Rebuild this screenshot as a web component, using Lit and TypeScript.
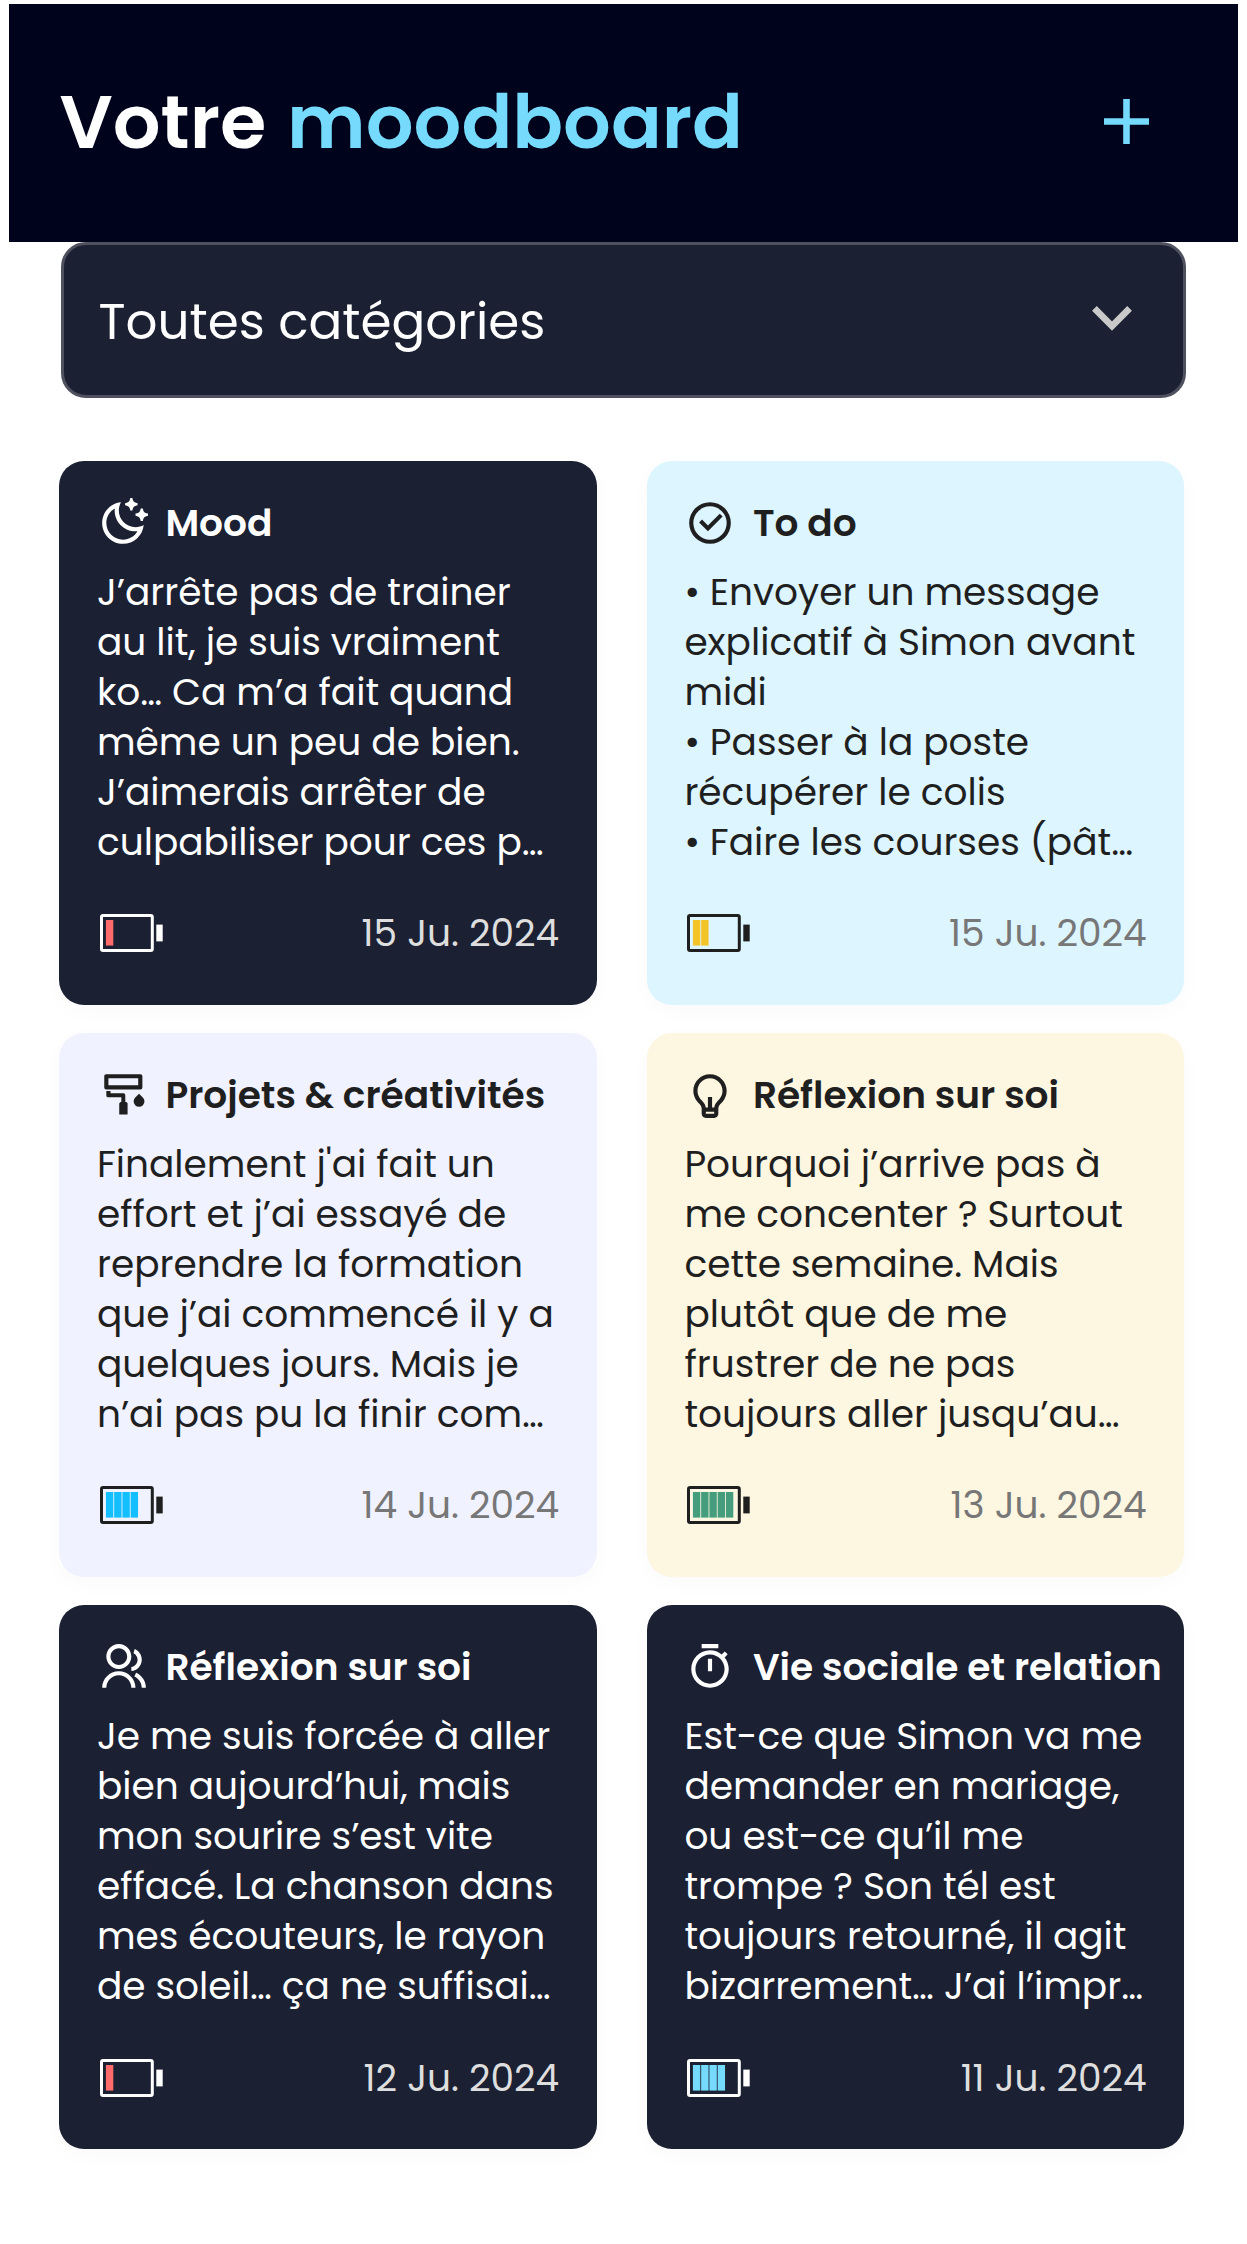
import {LitElement, html, css, svg} from 'lit';
import {customElement, property} from 'lit/decorators.js';

const icons: Record<string, unknown> = {
    moon: svg`<path d="M10 6C10 10.4183 13.5817 14 18 14C19.4386 14 20.7885 13.6203 21.9549 12.9556C21.4738 18.0302 17.2005 22 12 22C6.47715 22 2 17.5228 2 12C2 6.79948 5.9698 2.52616 11.0444 2.04507C10.3797 3.21152 10 4.56142 10 6ZM4 12C4 16.4183 7.58172 20 12 20C14.9654 20 17.5757 18.3788 18.9571 15.9546C18.6407 15.9848 18.3214 16 18 16C12.4772 16 8 11.5228 8 6C8 5.67863 8.01524 5.35933 8.04536 5.04293C5.62119 6.42426 4 9.03458 4 12ZM18.1642 2.29104L19 2.5V3.5L18.1642 3.70896C17.4476 3.8881 16.8881 4.4476 16.709 5.16417L16.5 6H15.5L15.291 5.16417C15.1119 4.4476 14.5524 3.8881 13.8358 3.70896L13 3.5V2.5L13.8358 2.29104C14.5524 2.1119 15.1119 1.5524 15.291 0.835829L15.5 0H16.5L16.709 0.835829C16.8881 1.5524 17.4476 2.1119 18.1642 2.29104ZM23.1642 7.29104L24 7.5V8.5L23.1642 8.70896C22.4476 8.8881 21.8881 9.4476 21.709 10.1642L21.5 11H20.5L20.291 10.1642C20.1119 9.4476 19.5524 8.8881 18.8358 8.70896L18 8.5V7.5L18.8358 7.29104C19.5524 7.1119 20.1119 6.5524 20.291 5.83583L20.5 5H21.5L21.709 5.83583C21.8881 6.5524 22.4476 7.1119 23.1642 7.29104Z"/>`,
    check: svg`<path fill-rule="evenodd" d="M12 22a10 10 0 1 1 0-20 10 10 0 0 1 0 20ZM12 20a8 8 0 1 0 0-16 8 8 0 0 0 0 16Z"/><path d="M11.0026 16L6.75999 11.7574L8.17421 10.3431L11.0026 13.1716L16.6595 7.51472L18.0737 8.92893Z"/>`,
    roller: svg`<path fill-rule="evenodd" d="M3.9 2H20.4Q21.3 2 21.3 2.9V8.4Q21.3 9.3 20.4 9.3H3.9Q3 9.3 3 8.4V2.9Q3 2 3.9 2ZM5 4V7.3H19.3V4Z"/><path d="M4 10.1H6V11.2H12.2Q13.1 11.2 13.1 12.1V15.3H13.6L14.2 16V21.4H10.2V16L10.8 15.3H11.2V13.1H4.9Q4 13.1 4 12.2Z"/><path d="M19.7 11.4L21.5 13.2A2.6 2.6 0 1 1 17.9 13.2Z"/>`,
    bulb: svg`<path d="M9.97308 18H11V13H13V18H14.0269C14.1589 16.7984 14.7721 15.8065 15.7676 14.7226C15.8797 14.6006 16.5988 13.8564 16.6841 13.7501C17.5318 12.6931 18 11.385 18 10C18 6.68629 15.3137 4 12 4C8.68629 4 6 6.68629 6 10C6 11.3843 6.46774 12.6917 7.31462 13.7484C7.40004 13.855 8.12081 14.6012 8.23154 14.7218C9.22766 15.8064 9.84103 16.7984 9.97308 18ZM10 20V21H14V20H10ZM5.75395 14.9992C4.65645 13.6297 4 11.8915 4 10C4 5.58172 7.58172 2 12 2C16.4183 2 20 5.58172 20 10C20 11.8925 19.3428 13.6315 18.2443 15.0014C17.624 15.7748 16 17 16 18.5V21C16 22.1046 15.1046 23 14 23H10C8.89543 23 8 22.1046 8 21V18.5C8 17 6.37458 15.7736 5.75395 14.9992Z"/>`,
    group: svg`<path d="M2 22C2 17.5817 5.58172 14 10 14C14.4183 14 18 17.5817 18 22H16C16 18.6863 13.3137 16 10 16C6.68629 16 4 18.6863 4 22H2ZM10 13C6.685 13 4 10.315 4 7C4 3.685 6.685 1 10 1C13.315 1 16 3.685 16 7C16 10.315 13.315 13 10 13ZM10 11C12.21 11 14 9.21 14 7C14 4.79 12.21 3 10 3C7.79 3 6 4.79 6 7C6 9.21 7.79 11 10 11ZM18.2837 14.7028C21.0644 15.9561 23 18.7519 23 22H21C21 19.564 19.5483 17.4671 17.4628 16.5271L18.2837 14.7028ZM17.5962 3.41321C19.5944 4.23703 21 6.20361 21 8.5C21 11.3702 18.8042 13.7252 16 13.9776V11.9646C17.6967 11.7222 19 10.264 19 8.5C19 7.11935 18.2016 5.92603 17.041 5.35635L17.5962 3.41321Z"/>`,
    timer: svg`<path d="M17.6177 5.9681L19.0711 4.51472L20.4853 5.92893L19.0319 7.38231C20.2635 8.92199 21 10.875 21 13C21 17.9706 16.9706 22 12 22C7.02944 22 3 17.9706 3 13C3 8.02944 7.02944 4 12 4C14.125 4 16.078 4.73647 17.6177 5.9681ZM12 20C15.866 20 19 16.866 19 13C19 9.13401 15.866 6 12 6C8.13401 6 5 9.13401 5 13C5 16.866 8.13401 20 12 20ZM11 8H13V14H11V8ZM8 1H16V3H8V1Z"/>`,
};

interface Note {
    theme: string;
    icon: string;
    title: string;
    lines: string[];
    level: number;
    color: string;
    date: string;
}

const notes: Note[] = [
    {
        theme: 'dark', icon: 'moon', title: 'Mood',
        lines: [
            'J’arrête pas de trainer',
            'au lit, je suis vraiment',
            'ko… Ca m’a fait quand',
            'même un peu de bien.',
            'J’aimerais arrêter de',
            'culpabiliser pour ces p…',
        ],
        level: 1, color: '#ff6a6a', date: '15 Ju. 2024',
    },
    {
        theme: 'sky', icon: 'check', title: 'To do',
        lines: [
            '• Envoyer un message',
            'explicatif à Simon avant',
            'midi',
            '• Passer à la poste',
            'récupérer le colis',
            '• Faire les courses (pât…',
        ],
        level: 2, color: '#f3c428', date: '15 Ju. 2024',
    },
    {
        theme: 'lavender', icon: 'roller', title: 'Projets & créativités',
        lines: [
            'Finalement j\'ai fait un',
            'effort et j’ai essayé de',
            'reprendre la formation',
            'que j’ai commencé il y a',
            'quelques jours. Mais je',
            'n’ai pas pu la finir com…',
        ],
        level: 4, color: '#13bfff', date: '14 Ju. 2024',
    },
    {
        theme: 'cream', icon: 'bulb', title: 'Réflexion sur soi',
        lines: [
            'Pourquoi j’arrive pas à',
            'me concenter ? Surtout',
            'cette semaine. Mais',
            'plutôt que de me',
            'frustrer de ne pas',
            'toujours aller jusqu’au…',
        ],
        level: 5, color: '#469d7d', date: '13 Ju. 2024',
    },
    {
        theme: 'dark', icon: 'group', title: 'Réflexion sur soi',
        lines: [
            'Je me suis forcée à aller',
            'bien aujourd’hui, mais',
            'mon sourire s’est vite',
            'effacé. La chanson dans',
            'mes écouteurs, le rayon',
            'de soleil… ça ne suffisai…',
        ],
        level: 1, color: '#ff6a6a', date: '12 Ju. 2024',
    },
    {
        theme: 'dark', icon: 'timer', title: 'Vie sociale et relation',
        lines: [
            'Est-ce que Simon va me',
            'demander en mariage,',
            'ou est-ce qu’il me',
            'trompe ? Son tél est',
            'toujours retourné, il agit',
            'bizarrement… J’ai l’impr…',
        ],
        level: 4, color: '#75dafc', date: '11 Ju. 2024',
    },
];

@customElement('mood-battery')
export class MoodBattery extends LitElement {
    @property({type: Number}) level = 0;
    @property() color = '';

    static styles = css`
        :host {
            display: block;
        }
        .battery {
            display: block;
            width: 63px;
            height: 38px;
        }
        .body {
            fill: none;
            stroke: currentColor;
            stroke-width: 3;
        }
        .nub {
            fill: currentColor;
        }
    `;

    render() {
        return html`
            <svg class="battery" viewBox="0 0 63 38">
                <rect class="body" x="1.5" y="1.5" width="50.8" height="35" rx="1.5"/>
                ${Array.from({length: this.level}, (_, i) => svg`<rect x=${5.9 + i * 8.25} y="6" width="7.4" height="25.6" fill=${this.color}/>`)}
                <rect class="nub" x="56.3" y="10.6" width="6.4" height="16.8"/>
            </svg>
        `;
    }
}

@customElement('mood-card')
export class MoodCard extends LitElement {
    @property({attribute: false}) note!: Note;

    static styles = css`
        :host {
            display: block;
        }
        .card {
            box-sizing: border-box;
            height: 544px;
            padding: 37px 37.5px 0;
            border-radius: 25px;
            box-shadow: 0 6px 22px rgba(0, 0, 0, 0.025);
            font-size: 37.5px;
            line-height: 50px;
            white-space: nowrap;
        }
        .dark {
            background: #1b2032;
            color: #fff;
            --date: #dedede;
        }
        .sky {
            background: #dcf5ff;
        }
        .lavender {
            background: #f0f2ff;
        }
        .cream {
            background: #fdf6e1;
        }
        .sky, .lavender, .cream {
            color: #1f1f1f;
            --date: #777;
        }
        .heading {
            display: flex;
            align-items: center;
            gap: 17.5px;
            height: 50px;
            padding-left: 1px;
            font-weight: 600;
        }
        .icon {
            flex: none;
            width: 50px;
            height: 50px;
            fill: currentColor;
        }
        .text {
            margin-top: 19px;
        }
        .footer {
            display: flex;
            align-items: center;
            justify-content: space-between;
            margin-top: 41.5px;
            padding-left: 3px;
        }
        .date {
            color: var(--date);
        }
    `;

    render() {
        const {theme, icon, title, lines, level, color, date} = this.note;
        return html`
            <article class="card ${theme}">
                <div class="heading">
                    <svg class="icon" viewBox="0 0 24 24">${icons[icon]}</svg>
                    <span>${title}</span>
                </div>
                <div class="text">
                    ${lines.map(line => html`<div>${line}</div>`)}
                </div>
                <div class="footer">
                    <mood-battery .level=${level} .color=${color}></mood-battery>
                    <span class="date">${date}</span>
                </div>
            </article>
        `;
    }
}

@customElement('app-root')
export class AppRoot extends LitElement {
    static styles = css`
        :host {
            display: block;
            box-sizing: border-box;
            height: 2244px;
            padding: 4px 9.4px 0;
            background: #fff;
            font-family: Poppins, Inter, 'Open Sans', sans-serif;
            overflow: hidden;
        }
        .header {
            box-sizing: border-box;
            display: flex;
            align-items: center;
            justify-content: space-between;
            height: 238px;
            padding: 0 88.5px 3px 50px;
            background: #00031c;
        }
        .title {
            margin: 0;
            color: #fff;
            font-size: 75px;
            font-weight: 600;
            line-height: 90px;
        }
        .accent {
            margin-left: 3px;
            color: #75dafc;
        }
        .plus {
            width: 45px;
            height: 45px;
            fill: #75dafc;
        }
        .select {
            box-sizing: border-box;
            display: flex;
            align-items: center;
            justify-content: space-between;
            height: 156px;
            margin: 0 52px 0 51.6px;
            padding: 3px 50.5px 0 34.5px;
            border: 3px solid #50515f;
            border-radius: 25px;
            background: #1b2032;
            color: #fff;
            font-size: 50px;
            line-height: 60px;
        }
        .chevron {
            width: 40px;
            height: 25px;
            margin-bottom: 6px;
            fill: none;
            stroke: #c9c9c9;
            stroke-width: 6.6;
        }
        .grid {
            display: grid;
            grid-template-columns: repeat(2, 537.3px);
            gap: 28.2px 50.2px;
            padding: 62.8px 50px 0;
        }
    `;

    render() {
        return html`
            <header class="header">
                <h1 class="title">Votre <span class="accent">moodboard</span></h1>
                <svg class="plus" viewBox="0 0 45 45"><path d="M19.2 0h6.6v19.2H45v6.6H25.8V45h-6.6V25.8H0v-6.6h19.2z"/></svg>
            </header>
            <div class="select">
                <span>Toutes catégories</span>
                <svg class="chevron" viewBox="0 0 40 25"><path d="M2.4 2.4L20 20.1L37.6 2.4"/></svg>
            </div>
            <main class="grid">
                ${notes.map(note => html`<mood-card .note=${note}></mood-card>`)}
            </main>
        `;
    }
}
